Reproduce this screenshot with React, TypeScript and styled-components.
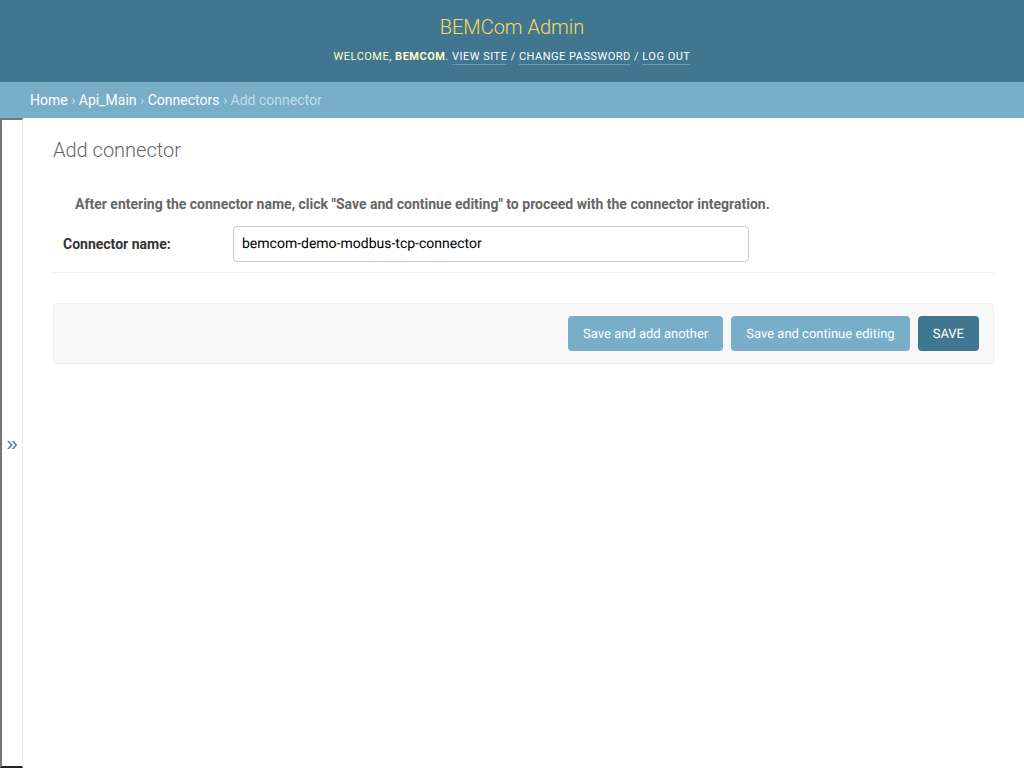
import React from "react";
import styled, { createGlobalStyle } from "styled-components";

const Global = createGlobalStyle`
  html, body { margin: 0; padding: 0; height: 100%; }
  body { font-family: Roboto, "Lucida Grande", "DejaVu Sans", Arial, sans-serif; font-size: 14px; color: #333; background: #fff; }
  #root { height: 100%; }
`;

const Page = styled.div`
  height: 768px;
  display: flex;
  flex-direction: column;
  overflow: hidden;
`;

const Header = styled.header`
  height: 82px;
  box-sizing: border-box;
  background: #417690;
  color: #ffc;
  padding-top: 15px;
  display: flex;
  flex-direction: column;
  align-items: center;
`;

const Branding = styled.h1`
  margin: 0;
  font-size: 20px;
  line-height: 24px;
  font-weight: 300;
  color: #f5dd5d;
`;

const UserTools = styled.div`
  margin-top: 10px;
  font-size: 11px;
  line-height: 16px;
  letter-spacing: 0.5px;
  text-transform: uppercase;
  font-weight: 400;
  color: #ffc;
  strong { font-weight: 700; }
`;

const ToolLink = styled.a`
  color: #fff;
  border-bottom: 1px solid rgba(255, 255, 255, 0.25);
  text-decoration: none;
  padding-bottom: 1px;
`;

const Breadcrumbs = styled.nav`
  height: 36px;
  box-sizing: border-box;
  background: #79aec8;
  padding: 0 30px;
  font-size: 14px;
  line-height: 36px;
  color: #c4dce8;
`;

const Crumb = styled.a`
  color: #fff;
  text-decoration: none;
`;

const Main = styled.div`
  flex: 1;
  display: flex;
  min-height: 0;
`;

const SidebarToggle = styled.button`
  width: 23px;
  box-sizing: border-box;
  flex: none;
  padding: 0;
  background: #fff;
  border-style: solid;
  border-width: 2px 1px 2px 2px;
  border-color: #767676 #eaeaea #222 #767676;
  color: #447e9b;
  font-family: "Liberation Sans", sans-serif;
  font-size: 20px;
  line-height: 1;
  display: flex;
  align-items: center;
  justify-content: center;
`;

const Content = styled.main`
  flex: 1;
  min-width: 0;
  padding: 20px 30px;
`;

const Title = styled.h2`
  margin: 0 0 34px;
  font-size: 20px;
  line-height: 24px;
  font-weight: 300;
  color: #666;
`;

const Hint = styled.p`
  margin: 0;
  padding-left: 22px;
  font-size: 14px;
  line-height: 16px;
  font-weight: 700;
  color: #666;
`;

const FormRow = styled.div`
  margin-top: 6px;
  padding: 8px 10px 10px;
  border-bottom: 1px solid #eee;
  display: flex;
  align-items: center;
`;

const Label = styled.label`
  width: 170px;
  flex: none;
  font-size: 14px;
  font-weight: 700;
  color: #333;
`;

const TextInput = styled.input`
  width: 516px;
  height: 36px;
  box-sizing: border-box;
  padding: 0 8px;
  border: 1px solid #ccc;
  border-radius: 4px;
  background: #fff;
  font-family: Roboto, sans-serif;
  font-size: 14px;
  color: #000;
  text-rendering: geometricPrecision;
`;

const SubmitRow = styled.div`
  margin-top: 30px;
  height: 61px;
  box-sizing: border-box;
  padding: 0 14px;
  background: #f8f8f8;
  border: 1px solid #eee;
  border-radius: 4px;
  display: flex;
  align-items: center;
  justify-content: flex-end;
  gap: 8px;
`;

const ActionButton = styled.button<{ $primary?: boolean }>`
  height: 35px;
  box-sizing: border-box;
  padding: 1px 15px 0;
  border: 0;
  border-radius: 4px;
  background: ${(p) => (p.$primary ? "#417690" : "#79aec8")};
  color: #fff;
  font-family: Roboto, sans-serif;
  font-size: 13px;
  font-weight: 400;
  text-rendering: geometricPrecision;
`;

export default function App() {
  return (
    <Page>
      <Global />
      <Header>
        <Branding>BEMCom Admin</Branding>
        <UserTools>
          Welcome, <strong>bemcom</strong>. <ToolLink>View site</ToolLink> / <ToolLink>Change password</ToolLink> / <ToolLink>Log out</ToolLink>
        </UserTools>
      </Header>
      <Breadcrumbs>
        <Crumb>Home</Crumb> › <Crumb>Api_Main</Crumb> › <Crumb>Connectors</Crumb> › Add connector
      </Breadcrumbs>
      <Main>
        <SidebarToggle>»</SidebarToggle>
        <Content>
          <Title>Add connector</Title>
          <Hint>After entering the connector name, click "Save and continue editing" to proceed with the connector integration.</Hint>
          <FormRow>
            <Label>Connector name:</Label>
            <TextInput defaultValue="bemcom-demo-modbus-tcp-connector" />
          </FormRow>
          <SubmitRow>
            <ActionButton>Save and add another</ActionButton>
            <ActionButton>Save and continue editing</ActionButton>
            <ActionButton $primary>SAVE</ActionButton>
          </SubmitRow>
        </Content>
      </Main>
    </Page>
  );
}
